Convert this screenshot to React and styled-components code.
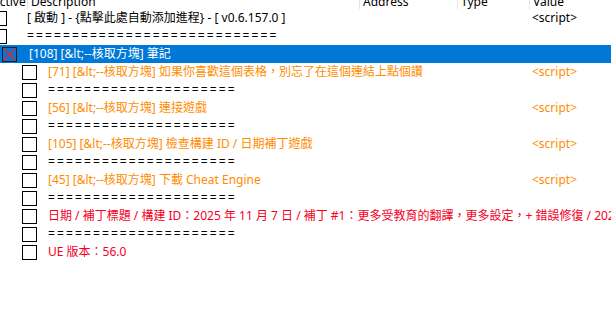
import React from "react";
import styled, { createGlobalStyle } from "styled-components";

const GlobalStyle = createGlobalStyle`
	html, body {
		margin: 0;
		padding: 0;
		background: #fff;
	}
	body {
		font-family: "Noto Sans", "Noto Sans CJK TC", sans-serif;
		font-size: 12px;
	}
`;

const Window = styled.div`
	width: 611px;
	height: 329px;
	overflow: hidden;
	background: #fff;
`;

// list is scrolled a bit to the right, so it starts left of the window
const List = styled.div`
	margin-left: -10px;
	width: 700px;
`;

const Header = styled.div`
	display: grid;
	grid-template-columns: 37px 332px 98px 72px 1fr;
	height: 18px;
	margin-top: -9px;
	overflow: hidden;
	color: #000;
`;

const HeaderCell = styled.div`
	padding: 2px 0 0 ${props => props.pad || 3}px;
	line-height: 18px;
	border-left: ${props => (props.first ? "none" : "1px solid #e5e5e5")};
	white-space: nowrap;
	overflow: hidden;
`;

const Row = styled.div`
	display: grid;
	grid-template-columns: 539px 1fr;
	height: 18px;
	align-items: center;
	background: ${props => (props.selected ? "#0078d7" : "transparent")};
	color: ${props => (props.selected ? "#fff" : props.color)};
`;

const Main = styled.div`
	display: flex;
	align-items: center;
	min-width: 0;
	padding-left: ${props => props.indent}px;
	white-space: nowrap;
	overflow: visible;
`;

const Box = styled.div`
	flex: none;
	width: 15px;
	height: 15px;
	box-sizing: border-box;
	border: 1px solid #000;
	background: #fff;
	margin-right: ${props => props.gap}px;
`;

const Label = styled.span`
	line-height: 18px;
	letter-spacing: ${props => (props.sep ? "2.12px" : "0")};
`;

const Value = styled.div`
	padding-left: 3px;
	line-height: 18px;
	white-space: nowrap;
`;

const ORANGE = "#ff8c00";
const RED = "#f5001f";

const levels = {
	0: { indent: 2, gap: 20 },
	1: { indent: 12, gap: 12 },
	2: { indent: 32, gap: 11 },
};

const sep = n => "=".repeat(n);

const rows = [
	{ level: 0, text: "[ 啟動 ] - {點擊此處自動添加進程} - [ v0.6.157.0 ]", value: "<script>", color: "#000" },
	{ level: 0, text: sep(28), isSep: true, color: "#000" },
	{ level: 1, text: "[108] [&lt;--核取方塊] 筆記", selected: true, color: "#fff" },
	{ level: 2, text: "[71] [&lt;--核取方塊] 如果你喜歡這個表格，別忘了在這個連結上點個讚", value: "<script>", color: ORANGE },
	{ level: 2, text: sep(21), isSep: true, color: "#000" },
	{ level: 2, text: "[56] [&lt;--核取方塊] 連接遊戲", value: "<script>", color: ORANGE },
	{ level: 2, text: sep(21), isSep: true, color: "#000" },
	{ level: 2, text: "[105] [&lt;--核取方塊] 檢查構建 ID / 日期補丁遊戲", value: "<script>", color: ORANGE },
	{ level: 2, text: sep(21), isSep: true, color: "#000" },
	{ level: 2, text: "[45] [&lt;--核取方塊] 下載 Cheat Engine", value: "<script>", color: ORANGE },
	{ level: 2, text: sep(21), isSep: true, color: "#000" },
	{ level: 2, text: "日期 / 補丁標題 / 構建 ID：2025 年 11 月 7 日 / 補丁 #1：更多受教育的翻譯，更多設定，+ 錯誤修復 / 2025 年 11 月", color: RED },
	{ level: 2, text: sep(21), isSep: true, color: "#000" },
	{ level: 2, text: "UE 版本：56.0", color: RED },
];

const CrossBox = ({ gap }) => (
	<svg width="15" height="15" viewBox="0 0 15 15" style={{ flex: "none", marginRight: gap }}>
		<rect x="0.5" y="0.5" width="14" height="14" fill="none" stroke="#1b1b2a" />
		<line x1="1.5" y1="1.5" x2="13.5" y2="13.5" stroke="#ff1a1a" strokeWidth="1.2" />
		<line x1="13.5" y1="1.5" x2="1.5" y2="13.5" stroke="#ff1a1a" strokeWidth="1.2" />
	</svg>
);

const AddressRow = ({ row }) => {
	const { indent, gap } = levels[row.level];
	return (
		<Row selected={row.selected} color={row.color}>
			<Main indent={indent}>
				{row.selected ? <CrossBox gap={gap} /> : <Box gap={gap} />}
				<Label sep={row.isSep}>{row.text}</Label>
			</Main>
			<Value>{row.value || ""}</Value>
		</Row>
	);
};

const App = () => {
	return (
		<Window>
			<GlobalStyle />
			<List>
				<Header>
					<HeaderCell first pad={2}>Active</HeaderCell>
					<HeaderCell>Description</HeaderCell>
					<HeaderCell>Address</HeaderCell>
					<HeaderCell>Type</HeaderCell>
					<HeaderCell>Value</HeaderCell>
				</Header>
				{rows.map((row, i) => (
					<AddressRow key={i} row={row} />
				))}
			</List>
		</Window>
	);
};

export default App;
